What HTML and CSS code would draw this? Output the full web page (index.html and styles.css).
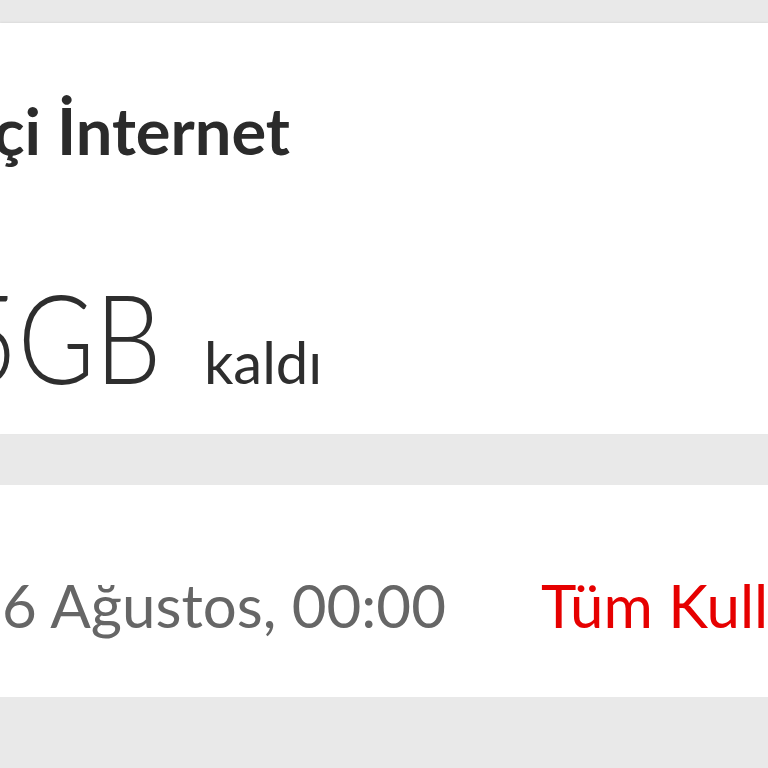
FILE: index.html
```html
<!DOCTYPE html>
<html>

<head>
    <meta charset="UTF-8">
    <title>Yurtiçi İnternet</title>
    <link rel="stylesheet" href="styles.css">
</head>

<body>
    <div class="page">
        <div class="card usage-card">
            <h1 class="usage-title">Yurtiçi İnternet</h1>
            <div class="usage-amount">
                <span class="amount-value">25GB</span>
                <span class="amount-label">kaldı</span>
            </div>
        </div>

        <div class="card renew-card">
            <div class="renew-row">
                <span class="renew-date">6 Ağustos, 00:00</span>
                <a class="renew-link" href="#">Tüm Kullanımlar</a>
            </div>
        </div>
    </div>
</body>

</html>
```

FILE: styles.css
```css
body {
    margin: 0;
    padding: 0;
    background-color: #e9e9e9;
    font-family: Lato, 'Open Sans', sans-serif;
    overflow: hidden;
}

.page {
    display: flex;
    flex-direction: column;
    gap: 51px;
    padding-top: 23px;
    height: 768px;
    box-sizing: border-box;
}

.card {
    background-color: #fff;
    overflow: hidden;
    white-space: nowrap;
}

.usage-card {
    height: 411px;
    box-shadow: 0 -1px 2px rgba(0, 0, 0, 0.06);
}

.usage-title {
    margin: 69px 0 0 -146px;
    font-size: 65px;
    font-weight: 700;
    line-height: 76px;
    color: #2b2b2b;
}

.usage-amount {
    display: flex;
    align-items: baseline;
    margin: 103px 0 0 -104px;
    color: #2e2e2e;
}

/* the brand font is narrower than Lato, so squeeze the big figure */
.amount-value {
    display: inline-block;
    font-size: 125px;
    font-weight: 300;
    line-height: 130px;
    transform: scaleX(0.84);
    transform-origin: left;
}

.amount-label {
    margin-left: -8px;
    font-size: 58px;
    font-weight: 400;
}

.renew-card {
    height: 212px;
}

.renew-row {
    display: flex;
    align-items: baseline;
    gap: 95px;
    margin: 84px 0 0 2px;
}

.renew-date {
    font-size: 60px;
    font-weight: 400;
    color: #666;
}

.renew-link {
    font-size: 60px;
    font-weight: 400;
    color: #e60000;
    text-decoration: none;
}
```
